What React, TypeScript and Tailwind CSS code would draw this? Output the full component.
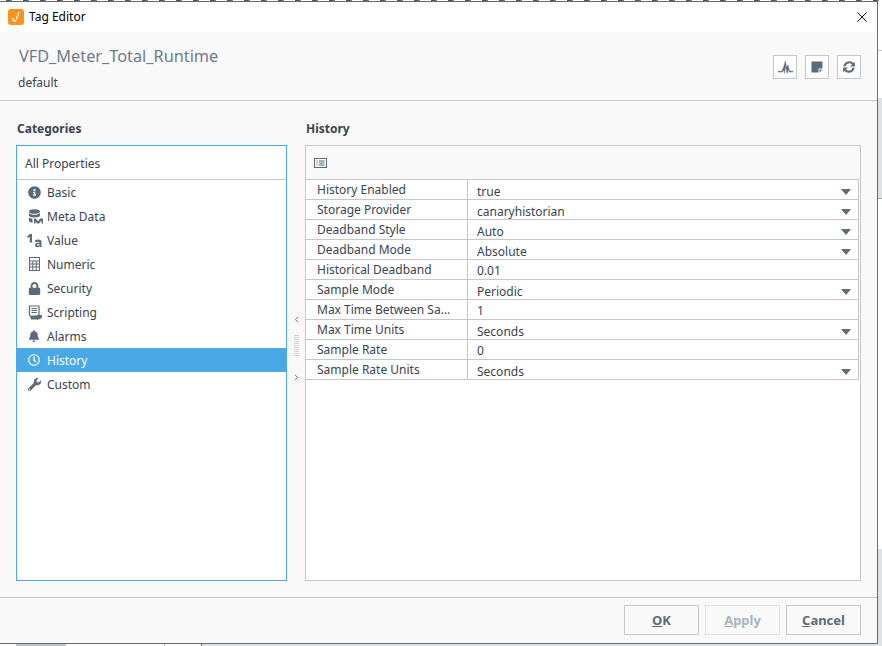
import { ChevronLeft, ChevronRight, X } from 'lucide-react';
import { FaInfoCircle, FaLock, FaBell, FaRegClock, FaWrench } from 'react-icons/fa';

const slate = '#5c6b7a';

const MetaDataIcon = () => (
  <svg width="16" height="15" viewBox="0 0 16 15" fill={slate}>
    <ellipse cx="6.500" cy="2.500" rx="5.500" ry="2.300" />
    <path d="M1 4v2.500c0 1 2 2 5.500 2s5.500-1 5.500-2V4c-1 1.200-3 1.800-5.500 1.800S2 5.200 1 4z" />
    <path d="M1 8.500V12c0 .8 1.500 1.500 3.500 1.800V9.800C3 9.600 1.800 9.200 1 8.500z" />
    <path d="M6 14.500V9.500h1.800L10 12.200l2.200-2.700H15v5h-1.500v-3L11 14.500h-2l-1.500-2v2z" />
  </svg>
);

const ValueIcon = () => (
  <svg className="-ml-[2px]" width="18" height="15" viewBox="0 0 18 15" fill={slate}>
    <path d="M1 3.500 4 1h2v8.500H3.800V3.800L2 5z" />
    <path d="M9 7.300c1.900-1.200 6.500-1.500 6.500 1.700V14h-1.800v-.8c-1.300 1.500-4.700 1.300-4.700-1 0-2.100 2.700-2.500 4.600-2.300 0-1.500-2.400-1.200-4-.4zm4.600 4c-1-.2-2.800-.1-2.800.8 0 1 2.200.8 2.800-.1z" />
  </svg>
);

const NumericIcon = () => (
  <svg width="13" height="14" viewBox="0 0 13 14" fill="none" stroke={slate}>
    <rect x="1.500" y="0.500" width="10" height="13" />
    <path d="M1.500 4h10M1.500 7h10M1.500 10h10M4.800 4v9.500M8.200 4v9.500" />
  </svg>
);

const ScriptingIcon = () => (
  <svg width="14" height="15" viewBox="0 0 14 15" fill="none" stroke={slate} strokeWidth="1.200">
    <path d="M1.500 11V1h9.500v9" />
    <path d="M3.500 3.500h5.500M3.500 5.500h5.500M3.500 7.500h5.500" />
    <path d="M2.500 11h7v3h-6z" fill={slate} />
    <path d="M9.500 10.500H13.500c0 2-1 3.500-4 3.500z" fill={slate} />
  </svg>
);

const categories = [
  { name: 'Basic', icon: <FaInfoCircle size={13} color={slate} /> },
  { name: 'Meta Data', icon: <MetaDataIcon /> },
  { name: 'Value', icon: <ValueIcon /> },
  { name: 'Numeric', icon: <NumericIcon /> },
  { name: 'Security', icon: <FaLock size={13} color={slate} /> },
  { name: 'Scripting', icon: <ScriptingIcon /> },
  { name: 'Alarms', icon: <FaBell size={12} color={slate} /> },
  { name: 'History', icon: <FaRegClock size={12} color="#ffffff" />, active: true },
  { name: 'Custom', icon: <FaWrench size={13} color={slate} /> },
];

const rows = [
  { label: 'History Enabled', value: 'true', select: true },
  { label: 'Storage Provider', value: 'canaryhistorian', select: true },
  { label: 'Deadband Style', value: 'Auto', select: true },
  { label: 'Deadband Mode', value: 'Absolute', select: true },
  { label: 'Historical Deadband', value: '0.01' },
  { label: 'Sample Mode', value: 'Periodic', select: true },
  { label: 'Max Time Between Sa...', value: '1' },
  { label: 'Max Time Units', value: 'Seconds', select: true },
  { label: 'Sample Rate', value: '0' },
  { label: 'Sample Rate Units', value: 'Seconds', select: true },
];

const IconButton = ({ children }: { children: React.ReactNode }) => (
  <button className="w-6 h-6 flex items-center justify-center border border-[#c4c8cc] bg-[#fdfdfd]">
    {children}
  </button>
);

const FooterButton = ({ hot, rest, disabled }: { hot: string; rest: string; disabled?: boolean }) => (
  <button
    className={`w-[75px] h-[30px] border pt-[2px] text-[13px] font-bold ${
      disabled ? 'border-[#dfe1e3] text-[#aab4bf]' : 'border-[#c4c8cc] text-[#5c6b7a]'
    }`}
  >
    <span className="underline">{hot}</span>
    {rest}
  </button>
);

export default function App() {
  return (
    <div
      className="w-[882px] h-[646px] flex flex-col overflow-hidden bg-white text-[#3a4350]"
      style={{ fontFamily: '"Noto Sans", sans-serif' }}
    >
      <div className="h-px shrink-0 bg-[repeating-linear-gradient(to_right,#ffffff_0,#ffffff_6px,#5a5048_6px,#5a5048_10px,#4a8ac0_10px,#4a8ac0_12px,#ffffff_12px,#ffffff_17px)]" />
      <div className="flex shrink-0 h-[643px]">
        <div className="w-[878px] shrink-0 flex flex-col border-t border-r border-b border-[#6a6a6a] bg-[#f9f9f9]">
          {/* Title bar */}
          <div className="h-[30px] shrink-0 flex items-center justify-between bg-white pl-2 pr-[6px]">
            <div className="flex items-center gap-[5px]">
              <div className="w-4 h-4 rounded-[3px] bg-[#f7931e] flex items-center justify-center">
                <svg width="12" height="12" viewBox="0 0 12 12" fill="none" stroke="#ffffff">
                  <path d="M9 1 6.200 8.500" strokeWidth="1.200" />
                  <path d="M3 7c-.5 2.500 1 3.500 3 2.500" strokeWidth="1.600" />
                </svg>
              </div>
              <span className="text-xs text-black">Tag Editor</span>
            </div>
            <X size={18} strokeWidth={1.2} color="#000000" />
          </div>

          {/* Tag header */}
          <div className="h-[69px] shrink-0 flex justify-between border-b border-[#c4c6c8] pl-[18px] pr-4">
            <div className="flex flex-col">
              <div className="mt-[12px] h-6 leading-6 text-[16.3px] pl-px text-[#6e7b8b]">VFD_Meter_Total_Runtime</div>
              <div className="mt-[6px] text-xs leading-[18px]">default</div>
            </div>
            <div className="flex gap-2 mt-[23px]">
              <IconButton>
                <svg width="15" height="15" viewBox="0 0 14 14" fill={slate} stroke={slate} strokeWidth="0.400">
                  <path d="M0 10.500h3.500L5.500 6 6.800 1l1.300 6.500 1.300-3 1 4.500.6 1.500h3v.8h-3.500L9.600 8.500 8.500 12.500 7 5.500 6 12.500 5 9l-1 2.300H0z" />
                </svg>
              </IconButton>
              <IconButton>
                <svg width="14" height="14" viewBox="0 0 14 14" fill={slate}>
                  <path d="M1.500 1.500h11v7h-3.500a.5.5 0 0 0-.5.5v3.500h-7zM9.500 9.500h3l-3 3z" />
                </svg>
              </IconButton>
              <IconButton>
                <svg width="14" height="14" viewBox="0 0 24 24" fill="none" stroke={slate} strokeWidth="3.500">
                  <path d="M4 11a8.500 8.500 0 0 1 15-4l1.500 2" />
                  <path d="M20 13a8.500 8.500 0 0 1-15 4l-1.500-2" />
                  <path d="M22 3v8h-8zM2 21v-8h8z" fill={slate} stroke="none" />
                </svg>
              </IconButton>
            </div>
          </div>

          {/* Body */}
          <div className="flex-1 min-h-0 flex pl-4 pr-4 pt-[18px] pb-4">
            <div className="w-[271px] flex flex-col">
              <div className="h-[26px] text-xs font-bold leading-5 pl-px">Categories</div>
              <div className="flex-1 bg-white border border-[#4aa8e6]">
                <div className="h-[34px] flex items-center border-b border-[#c4c6c8] pl-2 pt-[2px] text-xs">All Properties</div>
                {categories.map((c) => (
                  <div
                    key={c.name}
                    className={`h-6 flex items-center text-xs ${c.active ? 'bg-[#4aa8e6] text-white' : ''}`}
                  >
                    <span className="w-[30px] pl-[11px] shrink-0 flex items-center justify-start">{c.icon}</span>
                    <span className="pt-[2px]">{c.name}</span>
                  </div>
                ))}
              </div>
            </div>

            {/* Splitter */}
            <div className="w-[18px] flex flex-col items-center pt-[196px] text-[#5c6b7a]">
              <ChevronLeft size={9} strokeWidth={2.500} />
              <div className="w-[5px] h-[22px] mt-[11px] mb-[16px] bg-[repeating-linear-gradient(to_bottom,#cfd3d6_0,#cfd3d6_1px,transparent_1px,transparent_2px)]" />
              <ChevronRight size={9} strokeWidth={2.500} />
            </div>

            <div className="w-[556px] flex flex-col">
              <div className="h-[26px] text-xs font-bold leading-5 pl-px">History</div>
              <div className="flex-1 bg-white border border-[#c4c6c8] flex flex-col">
                <div className="h-[33px] shrink-0 bg-[#f9f9f9] flex items-center pl-[8px]">
                  <svg width="13" height="10" viewBox="0 0 13 10" fill="none" stroke={slate}>
                    <rect x="0.500" y="0.500" width="12" height="9" />
                    <path d="M2.500 3h1M5 3h5.500M2.500 5h1M5 5h5.500M2.500 7h1M5 7h5.500" />
                  </svg>
                </div>
                <div className="border-t border-[#c4c6c8] mr-px border-r">
                  {rows.map((r) => (
                    <div key={r.label} className="h-5 flex border-b border-[#c4c6c8] text-xs">
                      <div className="w-[162px] shrink-0 border-r border-[#c4c6c8] pl-[11px] leading-5">{r.label}</div>
                      <div className={`flex-1 flex justify-between pl-[9px] pr-[7px] ${r.select ? 'leading-6' : 'leading-[21px]'}`}>
                        <span>{r.value}</span>
                        {r.select && (
                          <svg className="mt-[9px]" width="10" height="6" viewBox="0 0 10 6" fill={slate}>
                            <path d="M0 0h10L5 6z" />
                          </svg>
                        )}
                      </div>
                    </div>
                  ))}
                </div>
              </div>
            </div>
          </div>

          {/* Footer */}
          <div className="h-[46px] shrink-0 border-t border-[#c4c6c8] flex justify-end gap-[6px] pr-4 pt-[7px]">
            <FooterButton hot="O" rest="K" />
            <FooterButton hot="A" rest="pply" disabled />
            <FooterButton hot="C" rest="ancel" />
          </div>
        </div>

        {/* Whatever is behind the dialog on the right */}
        <div className="flex-1 flex flex-col">
          <div className="h-[50px] shrink-0 border-b border-[#c4c6c8]" />
          <div className="h-[47px] shrink-0" />
          <div className="h-[101px] shrink-0 bg-[#dfe2e4] border-b border-[#a8acb0]" />
          <div className="h-[350px] shrink-0" />
          <div className="flex-1 bg-[#dfe2e4]" />
        </div>
      </div>

      {/* Strip below the dialog */}
      <div className="flex-1 flex">
        <div className="w-4 shrink-0" />
        <div className="w-[50px] shrink-0 bg-[#bcc3c8]" />
        <div className="w-[99px] shrink-0 border-r border-[#a8acb0]" />
        <div className="w-[37px] shrink-0 border-r border-[#6a6a6a]" />
        <div className="flex-1 bg-[#dfe2e4]" />
      </div>
    </div>
  );
}
